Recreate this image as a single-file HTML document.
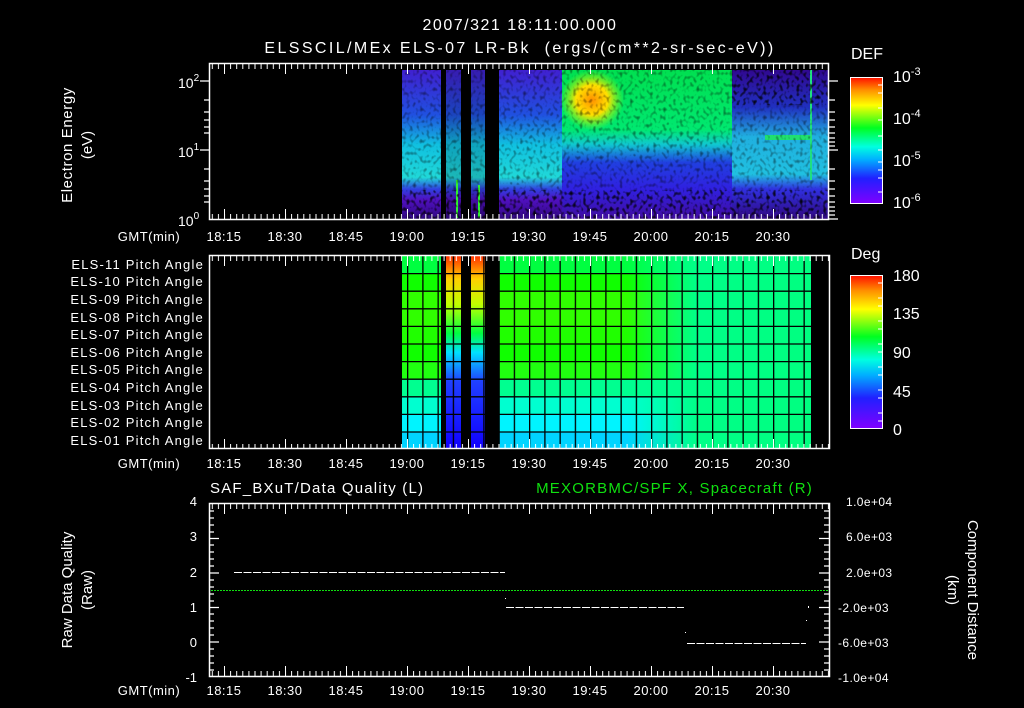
<!DOCTYPE html>
<html><head><meta charset="utf-8"><style>
html,body{margin:0;padding:0;background:#000;width:1024px;height:708px;overflow:hidden}
svg{display:block}
text{font-family:"Liberation Sans",sans-serif;fill:#fff}
</style></head><body>
<svg width="1024" height="708" viewBox="0 0 1024 708" xmlns="http://www.w3.org/2000/svg">
<defs>
<linearGradient id="rainbow" x1="0" y1="1" x2="0" y2="0">
<stop offset="0" stop-color="#8000ff"/><stop offset="0.2" stop-color="#2020ff"/><stop offset="0.35" stop-color="#00b0ff"/><stop offset="0.45" stop-color="#00ffe0"/><stop offset="0.6" stop-color="#00ff20"/><stop offset="0.78" stop-color="#ffff00"/><stop offset="0.9" stop-color="#ff9000"/><stop offset="1" stop-color="#ff1000"/>
</linearGradient>
<linearGradient id="specA" x1="0" y1="0" x2="0" y2="1">
<stop offset="0" stop-color="#4020d0"/><stop offset="0.3" stop-color="#2050e0"/><stop offset="0.5" stop-color="#10c0e0"/><stop offset="0.72" stop-color="#20d8d8"/><stop offset="0.8" stop-color="#3040e0"/><stop offset="0.87" stop-color="#5010c0"/><stop offset="1" stop-color="#300880"/>
</linearGradient>
<linearGradient id="specB" x1="0" y1="0" x2="0" y2="1">
<stop offset="0" stop-color="#00e050"/><stop offset="0.4" stop-color="#00e870"/><stop offset="0.5" stop-color="#10c8d0"/><stop offset="0.62" stop-color="#2040e0"/><stop offset="0.8" stop-color="#3020e0"/><stop offset="1" stop-color="#400ca0"/>
</linearGradient>
<linearGradient id="specC" x1="0" y1="0" x2="0" y2="1">
<stop offset="0" stop-color="#300890"/><stop offset="0.25" stop-color="#2030c0"/><stop offset="0.45" stop-color="#20b0e0"/><stop offset="0.7" stop-color="#20c0e0"/><stop offset="0.8" stop-color="#3030e0"/><stop offset="1" stop-color="#300880"/>
</linearGradient>
<radialGradient id="hot" cx="0.5" cy="0.5" r="0.5">
<stop offset="0" stop-color="#ff9000"/><stop offset="0.5" stop-color="#ffe000"/><stop offset="1" stop-color="#a0ff00" stop-opacity="0"/>
</radialGradient>
<linearGradient id="strip" x1="0" y1="0" x2="0" y2="1">
<stop offset="0" stop-color="#ff3000"/><stop offset="0.12" stop-color="#ffd000"/><stop offset="0.25" stop-color="#c0ff00"/><stop offset="0.4" stop-color="#00ff40"/><stop offset="0.5" stop-color="#00e0ff"/><stop offset="0.65" stop-color="#2040ff"/><stop offset="1" stop-color="#1000ff"/>
</linearGradient>
<linearGradient id="rowfade" x1="0" y1="0" x2="1" y2="0">
<stop offset="0" stop-color="#00ff90" stop-opacity="0"/><stop offset="0.55" stop-color="#00ff90" stop-opacity="0"/><stop offset="0.72" stop-color="#00ff88" stop-opacity="1"/><stop offset="1" stop-color="#00ff80" stop-opacity="1"/>
</linearGradient>
<pattern id="minT" x="224" y="0" width="6.1" height="708" patternUnits="userSpaceOnUse"><rect x="0" y="0" width="1" height="708" fill="#fff"/></pattern>
<pattern id="majT" x="224" y="0" width="61" height="708" patternUnits="userSpaceOnUse"><rect x="0" y="0" width="1" height="708" fill="#fff"/></pattern>
<pattern id="gridV" x="224" y="0" width="15.25" height="708" patternUnits="userSpaceOnUse"><rect x="0" y="0" width="1.3" height="708" fill="#000"/></pattern>
<filter id="speck" x="0" y="0" width="1" height="1">
<feTurbulence type="fractalNoise" baseFrequency="0.3 0.25" numOctaves="1" seed="3"/>
<feColorMatrix type="matrix" values="0 0 0 0 0  0 0 0 0 0  0 0 0 0 0  0 0 0 -3 1.5"/>
</filter>
</defs>

<text x="520" y="30" font-size="16" text-anchor="middle" letter-spacing="1.5">2007/321 18:11:00.000</text>
<text x="520" y="53" font-size="16" text-anchor="middle" letter-spacing="2.4" xml:space="preserve">ELSSCIL/MEx ELS-07 LR-Bk  (ergs/(cm**2-sr-sec-eV))</text>

<!-- TOP PANEL -->
<rect x="402" y="70" width="39" height="149" fill="url(#specA)"/>
<rect x="446" y="70" width="15" height="149" fill="url(#specA)" opacity="0.85"/>
<rect x="471" y="70" width="14" height="149" fill="url(#specA)" opacity="0.85"/>
<rect x="499" y="70" width="64" height="149" fill="url(#specA)"/>
<rect x="562" y="70" width="170" height="149" fill="url(#specB)"/>
<rect x="732" y="70" width="97" height="149" fill="url(#specC)"/>
<ellipse cx="592" cy="100" rx="32" ry="30" fill="url(#hot)"/>
<rect x="765" y="135" width="45" height="5" fill="#20e070"/>
<rect x="810" y="70" width="2" height="110" fill="#20e080"/>
<rect x="456" y="180" width="2" height="38" fill="#30f030"/>
<rect x="478" y="185" width="2" height="33" fill="#30f030"/>
<rect x="402" y="70" width="427" height="149" filter="url(#speck)" opacity="0.5"/>
<rect x="402" y="190" width="427" height="29" filter="url(#speck)" opacity="0.85"/>
<rect x="732" y="70" width="97" height="35" filter="url(#speck)" opacity="0.9"/>
<rect x="209.5" y="63.5" width="619" height="156" fill="none" stroke="#fff" stroke-width="1.5"/>
<rect x="209" y="64" width="620" height="5" fill="url(#minT)"/>
<rect x="209" y="64" width="620" height="10" fill="url(#majT)"/>
<rect x="209" y="214" width="620" height="5" fill="url(#minT)"/>
<rect x="209" y="209" width="620" height="10" fill="url(#majT)"/>
<g stroke="#fff" stroke-width="1.3">
<path d="M829 81h9M829 150h9M829 219h9M829 100h6M829 112h6M829 120h6M829 127h6M829 133h6M829 138h6M829 142h6M829 146h6M829 169h6M829 181h6M829 189h6M829 196h6M829 202h6M829 207h6M829 211h6M829 215h6"/>
<path d="M209 81h-9M209 150h-9M209 100h-5M209 112h-5M209 120h-5M209 127h-5M209 133h-5M209 169h-5M209 181h-5M209 189h-5M209 196h-5M209 202h-5"/>
</g>
<text x="178" y="88" font-size="14">10<tspan font-size="10" dy="-7">2</tspan></text>
<text x="178" y="157" font-size="14">10<tspan font-size="10" dy="-7">1</tspan></text>
<text x="178" y="226" font-size="14">10<tspan font-size="10" dy="-7">0</tspan></text>
<text transform="translate(72,145) rotate(-90)" font-size="15" text-anchor="middle" letter-spacing="0.6">Electron Energy</text>
<text transform="translate(92,145) rotate(-90)" font-size="15" text-anchor="middle">(eV)</text>

<g font-size="13" text-anchor="middle" letter-spacing="0.5">
<text x="149" y="241">GMT(min)</text>
<text x="224" y="241">18:15</text><text x="285" y="241">18:30</text><text x="346" y="241">18:45</text><text x="407" y="241">19:00</text><text x="468" y="241">19:15</text><text x="529" y="241">19:30</text><text x="590" y="241">19:45</text><text x="651" y="241">20:00</text><text x="712" y="241">20:15</text><text x="773" y="241">20:30</text>
</g>

<text x="851" y="59" font-size="16">DEF</text>
<rect x="850.5" y="77.5" width="32" height="126" fill="url(#rainbow)" stroke="#fff"/>
<g stroke="#fff" stroke-width="1"><path d="M878 85h4M878 93h4M878 108h4M878 120h4M878 136h4M878 150h4M878 162h4M878 170h4M878 178h4M878 192h4"/></g>
<g font-size="16"><text x="893" y="82">10<tspan font-size="11" dy="-7">-3</tspan></text><text x="893" y="124">10<tspan font-size="11" dy="-7">-4</tspan></text><text x="893" y="166">10<tspan font-size="11" dy="-7">-5</tspan></text><text x="893" y="208">10<tspan font-size="11" dy="-7">-6</tspan></text></g>

<!-- PITCH PANEL -->
<g>
<rect x="402" y="256" width="409" height="17.6" fill="#00ff40"/>
<rect x="402" y="273.6" width="409" height="17.6" fill="#10ff00"/>
<rect x="402" y="291.2" width="409" height="17.6" fill="#30ff00"/>
<rect x="402" y="308.8" width="409" height="17.6" fill="#30ff00"/>
<rect x="402" y="326.4" width="409" height="17.6" fill="#20ff00"/>
<rect x="402" y="344" width="409" height="17.6" fill="#10ff00"/>
<rect x="402" y="361.6" width="409" height="17.6" fill="#20ff10"/>
<rect x="402" y="379.2" width="409" height="17.6" fill="#00ff90"/>
<rect x="402" y="396.8" width="409" height="17.6" fill="#00ffd0"/>
<rect x="402" y="414.4" width="409" height="17.6" fill="#00f4ff"/>
<rect x="402" y="432" width="409" height="17" fill="#00d4ff"/>
<rect x="402" y="256" width="409" height="193" fill="url(#rowfade)"/>
<rect x="446" y="256" width="15" height="193" fill="url(#strip)"/>
<rect x="471" y="256" width="14" height="193" fill="url(#strip)"/>
<rect x="441" y="256" width="5" height="193" fill="#000"/>
<rect x="461" y="256" width="10" height="193" fill="#000"/>
<rect x="485" y="256" width="14" height="193" fill="#000"/>
<rect x="402" y="256" width="409" height="193" fill="url(#gridV)"/>
<g stroke="#000" stroke-width="1.3"><path d="M402 273.6h409M402 291.2h409M402 308.8h409M402 326.4h409M402 344h409M402 361.6h409M402 379.2h409M402 396.8h409M402 414.4h409M402 432h409"/></g>
</g>
<rect x="209.5" y="255.5" width="620" height="193" fill="none" stroke="#fff" stroke-width="1.5"/>
<rect x="209" y="256" width="620" height="5" fill="url(#minT)"/>
<rect x="209" y="256" width="620" height="10" fill="url(#majT)"/>
<rect x="209" y="444" width="620" height="5" fill="url(#minT)"/>
<rect x="209" y="439" width="620" height="10" fill="url(#majT)"/>
<g font-size="13" text-anchor="end" letter-spacing="1.2">
<text x="204" y="269">ELS-11 Pitch Angle</text><text x="204" y="286">ELS-10 Pitch Angle</text><text x="204" y="304">ELS-09 Pitch Angle</text><text x="204" y="322">ELS-08 Pitch Angle</text><text x="204" y="339">ELS-07 Pitch Angle</text><text x="204" y="357">ELS-06 Pitch Angle</text><text x="204" y="374">ELS-05 Pitch Angle</text><text x="204" y="392">ELS-04 Pitch Angle</text><text x="204" y="410">ELS-03 Pitch Angle</text><text x="204" y="427">ELS-02 Pitch Angle</text><text x="204" y="445">ELS-01 Pitch Angle</text>
</g>
<g font-size="13" text-anchor="middle" letter-spacing="0.5">
<text x="149" y="468">GMT(min)</text>
<text x="224" y="468">18:15</text><text x="285" y="468">18:30</text><text x="346" y="468">18:45</text><text x="407" y="468">19:00</text><text x="468" y="468">19:15</text><text x="529" y="468">19:30</text><text x="590" y="468">19:45</text><text x="651" y="468">20:00</text><text x="712" y="468">20:15</text><text x="773" y="468">20:30</text>
</g>
<text x="851" y="259" font-size="16">Deg</text>
<rect x="850.5" y="275.5" width="32" height="153" fill="url(#rainbow)" stroke="#fff"/>
<g stroke="#fff" stroke-width="1"><path d="M878 283h4M878 298h4M878 306h4M878 321h4M878 329h4M878 344h4M878 352h4M878 367h4M878 375h4M878 390h4M878 398h4M878 413h4M878 421h4"/></g>
<g font-size="16"><text x="893" y="281">180</text><text x="893" y="319">135</text><text x="893" y="358">90</text><text x="893" y="397">45</text><text x="893" y="435">0</text></g>

<!-- BOTTOM PANEL -->
<text x="210" y="493" font-size="15" letter-spacing="1.2">SAF_BXuT/Data Quality (L)</text>
<text x="813" y="493" font-size="15" text-anchor="end" letter-spacing="1.2" style="fill:#10e010">MEXORBMC/SPF X, Spacecraft (R)</text>
<rect x="209.5" y="503.5" width="620" height="173" fill="none" stroke="#fff" stroke-width="1.5"/>
<rect x="209" y="504" width="620" height="5" fill="url(#minT)"/>
<rect x="209" y="504" width="620" height="10" fill="url(#majT)"/>
<rect x="209" y="671" width="620" height="5" fill="url(#minT)"/>
<rect x="209" y="666" width="620" height="10" fill="url(#majT)"/>
<g stroke="#fff" stroke-width="1.2">
<path d="M209 538.5h10M209 573h10M209 607.5h10M209 642h10M209 511h5M209 518h5M209 525h5M209 532h5M209 545h5M209 552h5M209 559h5M209 566h5M209 580h5M209 587h5M209 594h5M209 601h5M209 614h5M209 621h5M209 628h5M209 635h5M209 649h5M209 656h5M209 663h5M209 670h5"/>
<path d="M829 538.5h-10M829 573h-10M829 607.5h-10M829 642h-10M829 511h-5M829 518h-5M829 525h-5M829 532h-5M829 545h-5M829 552h-5M829 559h-5M829 566h-5M829 580h-5M829 587h-5M829 594h-5M829 601h-5M829 614h-5M829 621h-5M829 628h-5M829 635h-5M829 649h-5M829 656h-5M829 663h-5M829 670h-5"/>
</g>
<path d="M234 572.5H505" stroke="#fff" stroke-width="1" stroke-dasharray="8,1.5"/>
<path d="M506 607.5H684" stroke="#fff" stroke-width="1" stroke-dasharray="8,1.5"/>
<path d="M687 643.5H806" stroke="#fff" stroke-width="1" stroke-dasharray="8,1.5"/>
<path d="M211 590.5H829" stroke="#10e010" stroke-width="1" stroke-dasharray="2,1"/>
<rect x="505" y="598" width="1" height="1" fill="#fff"/><rect x="808" y="606" width="1" height="2" fill="#fff"/><rect x="806" y="620" width="1" height="1" fill="#fff"/><rect x="685" y="632" width="1" height="1" fill="#fff"/>
<g font-size="13" text-anchor="end">
<text x="197" y="506">4</text><text x="197" y="541">3</text><text x="197" y="577">2</text><text x="197" y="612">1</text><text x="197" y="647">0</text><text x="197" y="682">-1</text>
</g>
<g font-size="12" letter-spacing="0.4">
<text x="846" y="506">1.0e+04</text><text x="846" y="541">6.0e+03</text><text x="846" y="577">2.0e+03</text><text x="838" y="612">-2.0e+03</text><text x="838" y="647">-6.0e+03</text><text x="838" y="682">-1.0e+04</text>
</g>
<text transform="translate(72,590) rotate(-90)" font-size="15" text-anchor="middle">Raw Data Quality</text>
<text transform="translate(92,590) rotate(-90)" font-size="15" text-anchor="middle">(Raw)</text>
<text transform="translate(968,590) rotate(90)" font-size="15" text-anchor="middle">Component Distance</text>
<text transform="translate(948,590) rotate(90)" font-size="15" text-anchor="middle">(km)</text>
<g font-size="13" text-anchor="middle" letter-spacing="0.5">
<text x="149" y="695">GMT(min)</text>
<text x="224" y="695">18:15</text><text x="285" y="695">18:30</text><text x="346" y="695">18:45</text><text x="407" y="695">19:00</text><text x="468" y="695">19:15</text><text x="529" y="695">19:30</text><text x="590" y="695">19:45</text><text x="651" y="695">20:00</text><text x="712" y="695">20:15</text><text x="773" y="695">20:30</text>
</g>
</svg>
</body></html>
